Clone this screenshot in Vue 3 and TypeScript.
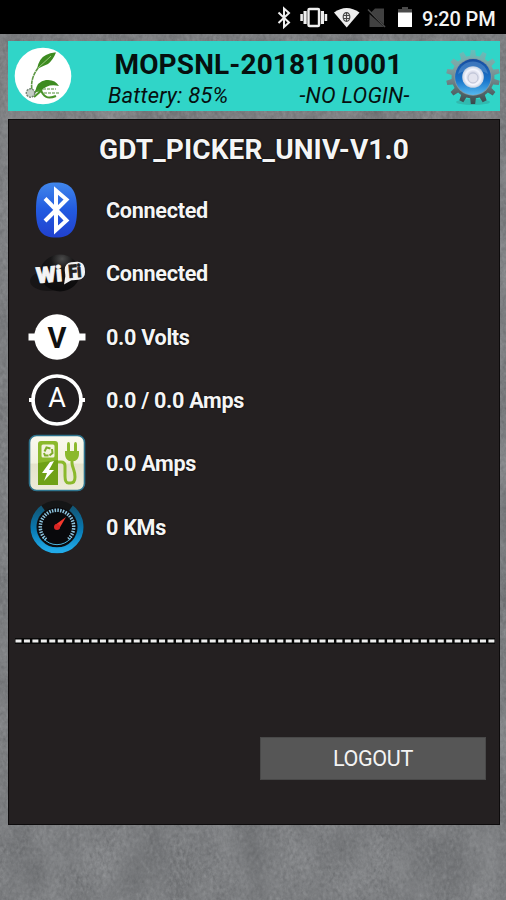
<script setup lang="ts">
type Kind = 'bluetooth' | 'wifi' | 'volt' | 'amp' | 'charger' | 'gauge'

interface Reading {
  kind: Kind
  text: string
}

const readings: Reading[] = [
  { kind: 'bluetooth', text: 'Connected' },
  { kind: 'wifi', text: 'Connected' },
  { kind: 'volt', text: '0.0 Volts' },
  { kind: 'amp', text: '0.0 / 0.0 Amps' },
  { kind: 'charger', text: '0.0 Amps' },
  { kind: 'gauge', text: '0 KMs' },
]

// Outline of a toothed wheel centred on the origin.
function wheel(teeth: number, outer: number, inner: number): string {
  const step = (Math.PI * 2) / teeth
  const points: string[] = []
  for (let i = 0; i < teeth; i++) {
    const mid = i * step - Math.PI / 2
    const corners: [number, number][] = [
      [-0.3, inner],
      [-0.18, outer],
      [0.18, outer],
      [0.3, inner],
    ]
    for (const [offset, radius] of corners) {
      const angle = mid + offset * step
      points.push(`${(Math.cos(angle) * radius).toFixed(2)},${(Math.sin(angle) * radius).toFixed(2)}`)
    }
  }
  return points.join(' ')
}

const gearPoints = wheel(14, 27, 21.5)
</script>

<template>
  <div class="screen">
    <svg class="concrete" width="506" height="866" aria-hidden="true">
      <filter id="grain" x="0" y="0" width="100%" height="100%" color-interpolation-filters="sRGB">
        <feTurbulence type="fractalNoise" baseFrequency="0.3 0.22" numOctaves="3" seed="8" result="fine" />
        <feTurbulence type="fractalNoise" baseFrequency="0.03 0.015" numOctaves="3" seed="3" result="coarse" />
        <feComposite in="fine" in2="coarse" operator="arithmetic" k2="0.5" k3="0.5" />
        <feColorMatrix values="0.2 0.12 0 0 0.325  0.2 0.12 0 0 0.332  0.2 0.12 0 0 0.342  0 0 0 0 1" />
      </filter>
      <rect width="506" height="866" filter="url(#grain)" />
    </svg>

    <div class="status">
      <svg class="status-icons" width="142" height="34" viewBox="274 0 142 34">
        <path d="M278.500 12.500 289 22.500 284 27V8.500L289 13 278.500 23" fill="none" stroke="#eee" stroke-width="2" />
        <g fill="#eee">
          <rect x="308.500" y="9" width="10.500" height="17" rx="1" fill="none" stroke="#eee" stroke-width="2.400" />
          <path d="M303.500 11h3.200v13h-3.200zM300.300 14h2.600v7h-2.600zM320.800 11h3.200v13h-3.200zM324.600 14h2.600v7h-2.600z" />
          <path d="M334 12.500Q346.500 3.500 359.500 12.500L346.700 27.500Z" />
        </g>
        <g fill="none" stroke="#444" stroke-width="1.200">
          <ellipse cx="346.500" cy="17" rx="3.300" ry="4.300" />
          <path d="M343.500 15.500h6M343.500 18.500h6M346.500 13v8" />
        </g>
        <path d="M375 8.500h9v16L371 12.500ZM369.500 14 384 27h-14.500Z" fill="#414141" />
        <path d="m368 9.500 17 17.500" stroke="#4a4a4a" stroke-width="1.500" />
        <path d="M398 9h4V7h6v2h4v4h-14z" fill="#4a4a4a" />
        <path d="M398 12.500h14V27h-14z" fill="#fff" />
      </svg>
      <span class="clock">9:20 PM</span>
    </div>

    <header class="header">
      <svg class="logo" width="58" height="58" viewBox="0 0 58 58">
        <circle cx="29" cy="29" r="28.300" fill="#fff" />
        <path d="M23 22Q25 11 32 8 37 5 42 5.500 39 13 34 17 29 19 23 22Z" fill="#3d8b20" />
        <path d="M24 21 37 9" stroke="#9bc77e" stroke-width="1" />
        <path d="M24 21Q16 32 18 43" fill="none" stroke="#5c9543" stroke-width="1.600" stroke-dasharray="4 .6" />
        <path d="M21 45Q23 34 32 33 41 32 45 39 34 36 27 44" fill="#3d8b20" />
        <path d="M20 46Q26 40 29 47 33 53 42 49M28 43l-8 7" fill="none" stroke="#4a9429" stroke-width="2" />
        <circle cx="16.500" cy="46" r="4.200" fill="#c6cec6" stroke="#718171" stroke-width="1.400" stroke-dasharray="2 1" />
        <path d="M29 42h13M30 46h16" stroke="#8cb67c" stroke-width="1.300" stroke-dasharray="3 1" />
      </svg>
      <div class="heading">
        <h1>MOPSNL-2018110001</h1>
        <div class="subline">
          <span class="battery">Battery: 85%</span>
          <span class="login">-NO LOGIN-</span>
        </div>
      </div>
      <svg class="gear" width="54" height="58" viewBox="-27 -28 54 58">
        <defs>
          <linearGradient id="steel" x1="0" y1="0" x2="0" y2="1">
            <stop offset="0" stop-color="#62c0bc" />
            <stop offset=".3" stop-color="#82a3a3" />
            <stop offset=".6" stop-color="#6d8084" />
            <stop offset="1" stop-color="#37484c" />
          </linearGradient>
          <linearGradient id="blueRing" x1="0" y1="0" x2="0" y2="1">
            <stop offset="0" stop-color="#164b9e" />
            <stop offset=".6" stop-color="#1976cc" />
            <stop offset="1" stop-color="#55b9ee" />
          </linearGradient>
          <radialGradient id="pearl">
            <stop offset="0" stop-color="#fff" />
            <stop offset=".35" stop-color="#c7cbdc" />
            <stop offset=".7" stop-color="#f6f7ff" />
            <stop offset="1" stop-color="#c5d0e0" />
          </radialGradient>
        </defs>
        <ellipse cx="0" cy="25" rx="17" ry="3" fill="#319e96" opacity=".5" />
        <polygon :points="gearPoints" fill="url(#steel)" />
        <circle r="18.700" fill="#8397a0" />
        <circle r="17.900" fill="url(#blueRing)" />
        <path d="M-15-3Q-12-15 0-15.500 12-15 15-3 0-12-15-3Z" fill="#75a9dc" opacity=".4" />
        <circle r="10.800" fill="url(#pearl)" />
        <circle cy="1" r="5" fill="#e3e4ef" stroke="#bfc4d7" />
      </svg>
    </header>

    <main class="panel">
      <h2>GDT_PICKER_UNIV-V1.0</h2>
      <ul class="readings">
        <li v-for="reading in readings" :key="reading.kind">
          <svg width="60" height="60" viewBox="-30 -30 60 60">
            <g v-if="reading.kind === 'bluetooth'">
              <defs>
                <linearGradient id="btBlue" x1="0" y1="0" x2="0" y2="1">
                  <stop offset="0" stop-color="#4187eb" />
                  <stop offset=".5" stop-color="#225ae0" />
                  <stop offset="1" stop-color="#2141ce" />
                </linearGradient>
              </defs>
              <path d="M-1-27.500C14-27.500 20-20 20 0S14 27.500-1 27.500-21 20-21 0-16-27.500-1-27.500Z" fill="url(#btBlue)" />
              <path d="M-12-11.500 9.500 10.500-1 20V-19.500L9.500-10.500-12 11" fill="none" stroke="#fff" stroke-width="4" />
            </g>
            <g v-else-if="reading.kind === 'wifi'">
              <defs>
                <radialGradient id="orb" cx=".55" cy=".12" r=".8">
                  <stop offset="0" stop-color="#4a4a4a" />
                  <stop offset=".35" stop-color="#171617" />
                  <stop offset="1" stop-color="#0c0b0c" />
                </radialGradient>
              </defs>
              <ellipse cx="-9" cy="8" rx="18" ry="10" fill="#171516" />
              <ellipse cx="3" cy="0" rx="20" ry="18.500" fill="url(#orb)" />
              <g transform="rotate(-5)">
                <rect x="8" y="-9.500" width="20" height="18" rx="7" fill="#f2f2f2" />
                <path d="M8.500 2 6 12 17 7Z" fill="#f2f2f2" />
                <text x="-21" y="8.500" class="wifi-word" textLength="26" lengthAdjust="spacingAndGlyphs" fill="#f4f4f4" stroke="#f4f4f4">Wi</text>
                <text x="11.500" y="6" class="wifi-word fi" textLength="13" lengthAdjust="spacingAndGlyphs" fill="#222" stroke="#222">Fi</text>
              </g>
            </g>
            <g v-else-if="reading.kind === 'volt'">
              <path d="M-28.500-3.500h8v7h-8zM20.500-3.500h8v7h-8z" fill="#fff" />
              <circle r="22.700" fill="#fff" />
              <text y="10.500" class="volt-letter" text-anchor="middle">V</text>
            </g>
            <g v-else-if="reading.kind === 'amp'">
              <path d="M-28-2h5v4h-5zM23-2h5v4h-5z" fill="#fff" />
              <circle r="24" fill="#211e20" stroke="#fff" stroke-width="3.700" />
              <text y="6.500" class="amp-letter" text-anchor="middle">A</text>
            </g>
            <g v-else-if="reading.kind === 'charger'">
              <defs>
                <linearGradient id="cream" x1="0" y1="0" x2="0" y2="1">
                  <stop offset="0" stop-color="#faf9ee" />
                  <stop offset=".5" stop-color="#f2f1df" />
                  <stop offset=".52" stop-color="#e5e3cb" />
                  <stop offset="1" stop-color="#edebd9" />
                </linearGradient>
              </defs>
              <rect x="-27.500" y="-27.500" width="55" height="55" rx="7" fill="url(#cream)" stroke="#2e738d" stroke-width="1.600" />
              <path d="M-19-19q0-3 3-3H-2q3 0 3 3V22h-20z" fill="#8bb92c" />
              <path d="M-19 0 1-3V22h-20z" fill="#6fa116" />
              <rect x="-15.500" y="-18.500" width="13" height="13" rx="1.500" fill="#f4f3df" />
              <path d="M-12.500-11.500l2-4 4 1M-5-14l.5 4-3 2.500M-8.500-7.500h-3.500l-1-2.500" fill="none" stroke="#7eac2b" stroke-width="2" />
              <path d="M-7-1-15 10h5l-3 8L-3 7h-5l5-9z" fill="#fff" />
              <path d="M1-1h3q4 0 4 4v10q0 7 3.500 7h2q4.500 0 4.500-6 0-4-1.500-8T15 0V-5" fill="none" stroke="#8bb92c" stroke-width="3" />
              <path d="M8-12h14v3q0 5-4 7h-6q-4-2-4-7zM10-11v-7q0-3 1.500-3t1.500 3v7zM17-11v-7q0-3 1.500-3t1.500 3v7z" fill="#8bb92c" />
            </g>
            <g v-else>
              <defs>
                <linearGradient id="dialBlue" x1="0" y1="0" x2="0" y2="1">
                  <stop offset="0" stop-color="#125878" />
                  <stop offset=".5" stop-color="#0878b1" />
                  <stop offset="1" stop-color="#21aae8" />
                </linearGradient>
              </defs>
              <circle r="26.500" fill="#141516" />
              <path d="M-14-19A23.500 23.500 0 1 0 14-19" fill="none" stroke="url(#dialBlue)" stroke-width="6" />
              <circle r="19.800" fill="#09090c" />
              <path d="M-11 12.500A16.700 16.700 0 1 1 11 12.500" fill="none" stroke="#8ec4df" stroke-width="3.500" stroke-dasharray="1.500 1.200" />
              <path d="M-14 11A18 18 0 0 0 14 11" fill="none" stroke="#4bb4dd" stroke-width="1" />
              <path d="M-2-2 9-10 2 2Z" fill="#f5382c" />
              <circle r="3" fill="#d92524" />
            </g>
          </svg>
          <span class="value">{{ reading.text }}</span>
        </li>
      </ul>
      <svg class="divider" width="482" height="8" viewBox="0 0 482 8">
        <path d="M0 4h480" stroke="#080808" stroke-width="6" />
        <path d="M.5 4h480" stroke="#ededed" stroke-width="3" stroke-dasharray="6 2.445" />
      </svg>
      <button class="logout" type="button">LOGOUT</button>
    </main>
  </div>
</template>

<style>
body {
  margin: 0;
}
</style>

<style scoped>
.screen {
  position: relative;
  width: 506px;
  height: 900px;
  overflow: hidden;
  background: #7b7d80;
  font-family: Roboto, "Liberation Sans", sans-serif;
}

.concrete {
  position: absolute;
  top: 34px;
  left: 0;
}

.status,
.header,
.panel {
  position: relative;
  box-sizing: border-box;
}

.status {
  display: flex;
  height: 34px;
  padding-left: 274px;
  background: #000;
}

.clock {
  margin-left: 6px;
  color: #f4f4f4;
  font-size: 20px;
  font-weight: 500;
  letter-spacing: -0.15px;
  line-height: 38px;
  white-space: nowrap;
}

.header {
  display: flex;
  align-items: flex-start;
  width: 491.5px;
  height: 70px;
  margin: 7px 0 0 8px;
  background: #30d5c8;
}

.logo {
  flex: none;
  margin: 6px 0 0 6px;
}

.heading {
  flex: none;
  width: 374px;
  padding-left: 36px;
  box-sizing: border-box;
  color: #06100f;
  white-space: nowrap;
}

h1,
h2 {
  margin: 0;
  font-size: 28px;
  font-weight: 700;
  letter-spacing: 0.13px;
}

h1 {
  padding: 7px 0 0 6.5px;
  line-height: 34px;
}

.subline {
  display: flex;
  font-size: 22px;
  font-style: italic;
  letter-spacing: 0.2px;
  line-height: 27px;
}

.battery {
  width: 191.5px;
}

.gear {
  flex: none;
  margin-top: 8px;
}

.panel {
  display: flex;
  flex-direction: column;
  width: 492px;
  height: 706px;
  margin: 8px 0 0 8px;
  border: 1px solid #0d0b0c;
  background: #242021;
  color: #f5f5f5;
}

h2 {
  padding-top: 12px;
  line-height: 35px;
  text-align: center;
  text-shadow: 0 0 2px #000;
}

.readings {
  margin: 11.5px 0 0;
  padding: 0 0 0 18px;
  list-style: none;
}

.readings li {
  display: flex;
  align-items: center;
  gap: 19px;
  height: 63.3px;
}

.value {
  padding-top: 1px;
  font-size: 21.6px;
  font-weight: 700;
  letter-spacing: -0.3px;
  text-shadow: 0 0 2px #000;
}

.wifi-word {
  font: 900 22px Roboto, sans-serif;
  stroke-width: 0.8px;
}

.wifi-word.fi {
  font-size: 18px;
}

.volt-letter {
  font: 700 29px Roboto, sans-serif;
  fill: #111;
}

.amp-letter {
  font: 400 27px Roboto, sans-serif;
  fill: #fff;
}

.divider {
  margin: 78.5px 0 0 6px;
}

.logout {
  align-self: flex-end;
  width: 226px;
  height: 43px;
  margin: 92px 13px 0 0;
  padding: 0;
  border: 1px solid #494949;
  background: #565656;
  color: #f3f3f3;
  font: 400 21.6px Roboto, "Liberation Sans", sans-serif;
  letter-spacing: -0.4px;
}
</style>
